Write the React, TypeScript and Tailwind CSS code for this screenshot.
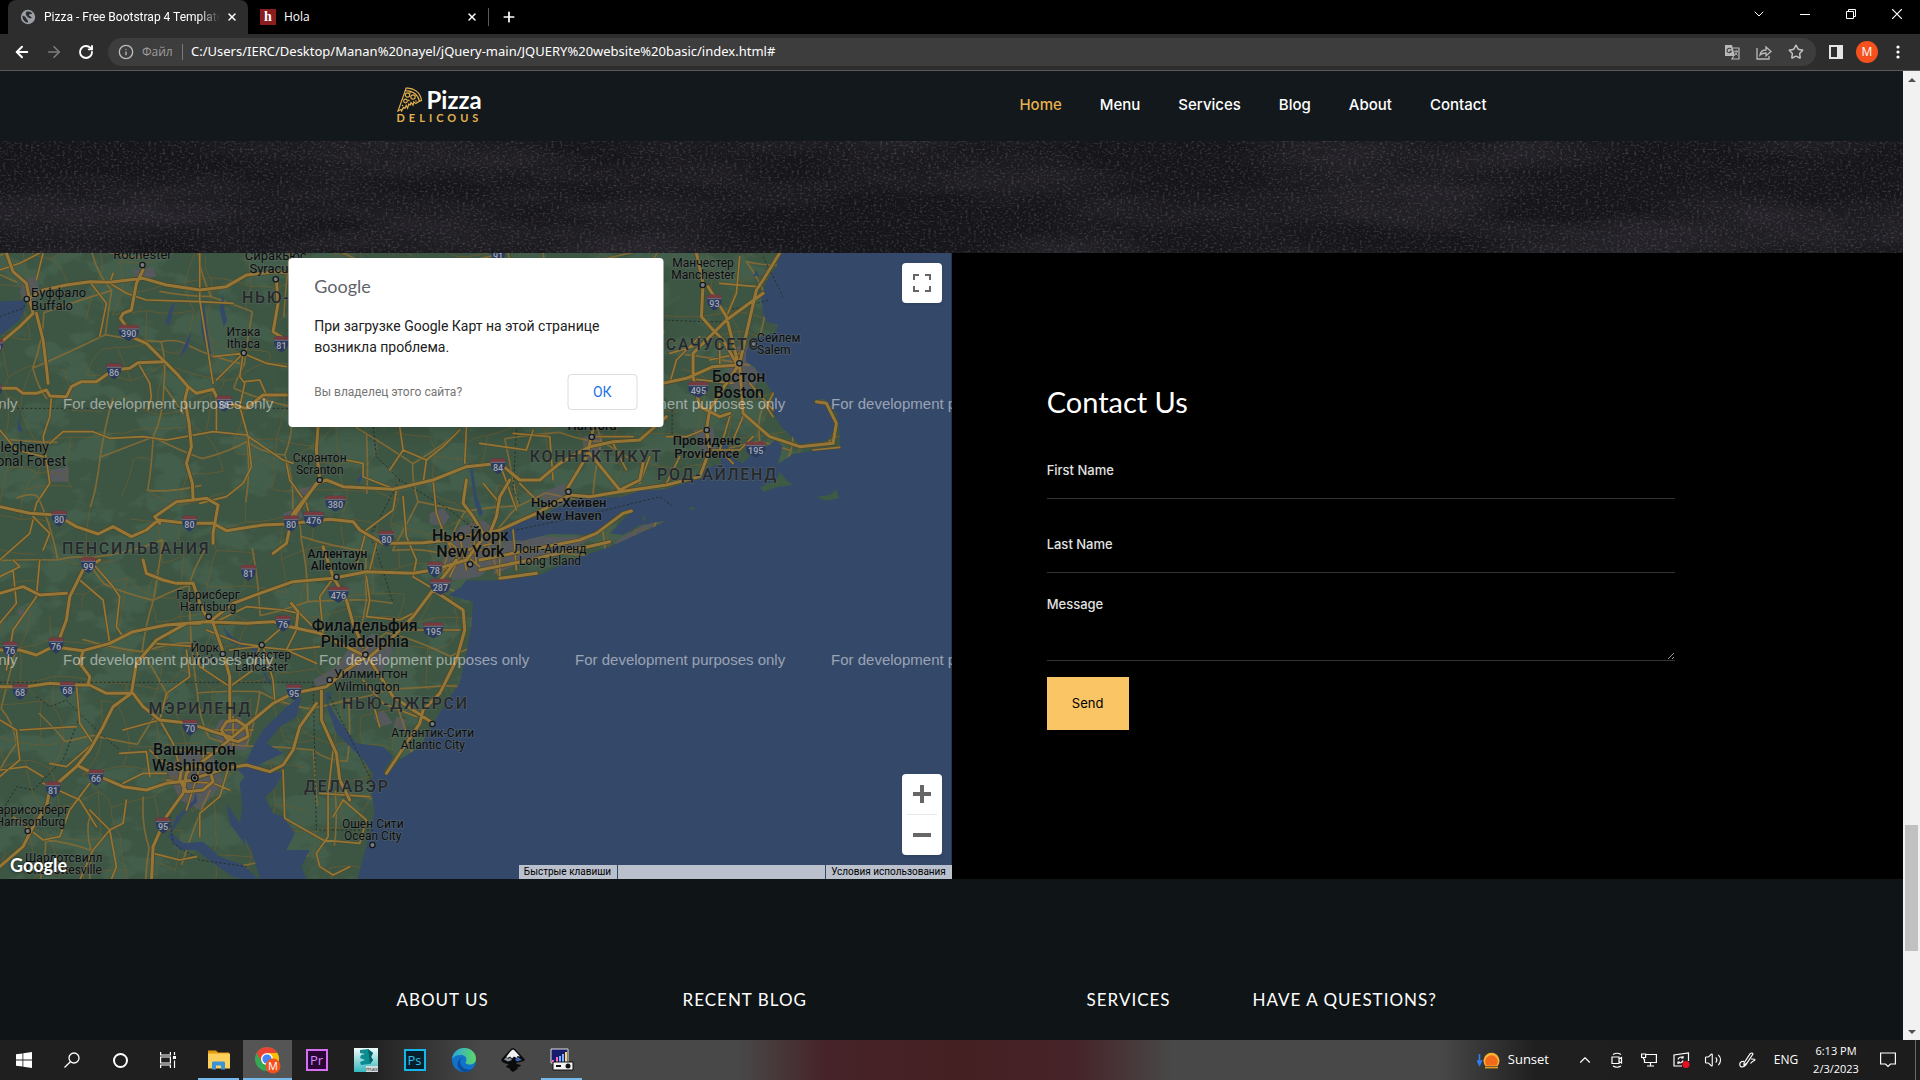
import React from "react";
import {
  ArrowLeft,
  ArrowRight,
  RotateCw,
  Info,
  X,
  Plus,
  Star,
  ChevronDown,
  ChevronUp,
  Volume2,
} from "lucide-react";

/* ------------------------------------------------------------------ */
/* Browser chrome                                                      */
/* ------------------------------------------------------------------ */

function TabStrip() {
  return (
    <div className="flex h-[34px] shrink-0 items-stretch bg-black text-xs text-white">
      <div className="ml-2 flex w-60 items-center rounded-t-lg bg-[#2d2d2d] pr-2 pl-3">
        <svg viewBox="0 0 16 16" className="size-4 shrink-0" aria-hidden="true">
          <circle cx="8" cy="8" r="7.2" fill="#9aa0a6" />
          <path d="M2.5 6.5 C4 7 6 8 6.4 9.4 C6.8 11 8.6 11.2 8 13.4 C5 13.6 2.2 11 2.5 6.5Z" fill="#2d2d2d" />
          <path d="M6.5 2.6 C8.4 2.2 11 2.6 12.4 4.6 C11 5.4 9.6 4.8 9 6 C8.4 7.2 11.6 7.2 11.8 9 C10.4 9.6 8.4 8.8 7.2 7.4 C6 6.4 5 4.6 6.5 2.6Z" fill="#2d2d2d" />
        </svg>
        <span className="ml-2 w-[176px] overflow-hidden font-['Roboto',sans-serif] whitespace-nowrap [mask-image:linear-gradient(to_right,black_88%,transparent)]">
          Pizza - Free Bootstrap 4 Template
        </span>
        <button aria-label="Close tab" className="ml-1 grid size-4 place-items-center">
          <X className="size-3" strokeWidth={3} />
        </button>
      </div>
      <div className="flex w-60 items-center pr-2 pl-3">
        <span className="grid size-4 shrink-0 place-items-center bg-[#8c1d1f] font-['Liberation_Serif',serif] text-sm leading-none font-bold">
          h
        </span>
        <span className="ml-2 flex-1">Hola</span>
        <button aria-label="Close tab" className="grid size-4 place-items-center">
          <X className="size-3" strokeWidth={3} />
        </button>
      </div>
      <div className="my-2 w-px bg-[#5a5a5a]" />
      <button aria-label="New tab" className="ml-2.5 grid w-5 place-items-center">
        <Plus className="size-4" strokeWidth={2.6} />
      </button>
      <div className="ml-auto flex items-center pb-1.5">
        <button aria-label="Search tabs" className="grid w-[46px] place-items-center">
          <ChevronDown className="size-4" strokeWidth={1.5} />
        </button>
        <button aria-label="Minimize" className="grid w-[46px] place-items-center">
          <span className="h-px w-2.5 bg-white" />
        </button>
        <button aria-label="Restore" className="grid w-[46px] place-items-center">
          <svg viewBox="0 0 10 10" className="size-2.5" fill="none" stroke="#fff" aria-hidden="true">
            <path d="M.5 2.5h7v7h-7zM2.5 2.5v-2h7v7h-2" />
          </svg>
        </button>
        <button aria-label="Close window" className="grid w-[46px] place-items-center">
          <svg viewBox="0 0 10 10" className="size-2.5" stroke="#fff" strokeWidth="1.2" aria-hidden="true">
            <path d="M0 0l10 10M10 0L0 10" />
          </svg>
        </button>
      </div>
    </div>
  );
}

function AddressBar() {
  return (
    <div className="flex h-[37px] shrink-0 items-center border-b border-[#5a5a5a] bg-[#2d2d2d] pr-1.5 text-[13px] text-white">
      <button aria-label="Back" className="ml-1.5 grid w-8 place-items-center">
        <ArrowLeft className="size-[18px]" strokeWidth={2.6} />
      </button>
      <button aria-label="Forward" className="grid w-8 place-items-center text-[#7d7d7d]">
        <ArrowRight className="size-[18px]" strokeWidth={2.2} />
      </button>
      <button aria-label="Reload" className="grid w-8 place-items-center">
        <RotateCw className="size-4" strokeWidth={2.8} />
      </button>
      <div className="ml-1.5 flex h-7 flex-1 items-center rounded-full bg-[#3d3d3d] pr-1">
        <Info className="ml-2.5 size-4 text-[#bdbdbd]" strokeWidth={2} />
        <span className="ml-2 w-8 text-xs text-[#9e9e9e]">Файл</span>
        <span className="mr-2 ml-2 h-4 w-px bg-[#7a7a7a]" />
        <input
          aria-label="Address"
          className="min-w-0 flex-1 bg-transparent font-['Noto_Sans',sans-serif] outline-none"
          defaultValue="C:/Users/IERC/Desktop/Manan%20nayel/jQuery-main/JQUERY%20website%20basic/index.html#"
        />
        <button aria-label="Translate" className="grid w-8 place-items-center">
          <svg viewBox="0 0 16 16" className="size-4" fill="none" aria-hidden="true">
            <path d="M1 1h7l3 11H1z" fill="#b9b9b9" />
            <path d="M9 4h6v11H8l1.6-2.6" stroke="#b9b9b9" strokeWidth="1.2" />
            <path d="M7 5.2a2.2 2.2 0 1 0 .3 2H5.4" stroke="#3d3d3d" strokeWidth="1.1" />
            <path d="M10.2 7.2h4M12.2 6.2v1M13.4 7.2c-.4 2-1.4 3-2.4 3.8M11 8.4c.6 1.4 1.4 2 2.6 2.8" stroke="#b9b9b9" />
          </svg>
        </button>
        <button aria-label="Share" className="grid w-8 place-items-center">
          <svg viewBox="0 0 16 16" className="size-4" fill="none" stroke="#b9b9b9" strokeWidth="1.3" aria-hidden="true">
            <path d="M1 4v11h12v-3" />
            <path d="M4 11c.4-3.6 2.600-5 6-5V3l5 4.500-5 4.300V9c-3 0-4.600.4-6 2z" />
          </svg>
        </button>
        <button aria-label="Bookmark" className="grid w-8 place-items-center">
          <Star className="size-4 text-[#c4c4c4]" strokeWidth={2.2} />
        </button>
      </div>
      <button aria-label="Side panel" className="ml-1 grid w-8 place-items-center">
        <span className="flex h-3.5 w-3.5 justify-end border-2 border-[#e4e4e4]">
          <span className="w-1 bg-[#e4e4e4]" />
        </span>
      </button>
      <button className="mx-1 grid size-[22px] place-items-center rounded-full bg-[#f4511e] text-xs">M</button>
      <button aria-label="Menu" className="grid w-8 place-items-center">
        <svg viewBox="0 0 4 14" className="h-3.5 w-1" fill="#fff" aria-hidden="true">
          <circle cx="2" cy="2" r="1.6" />
          <circle cx="2" cy="7" r="1.6" />
          <circle cx="2" cy="12" r="1.6" />
        </svg>
      </button>
    </div>
  );
}

function Scrollbar() {
  return (
    <div className="flex w-[17px] shrink-0 flex-col items-center bg-[#f1f1f1]">
      <div className="grid h-[17px] place-items-center">
        <span className="border-x-4 border-b-4 border-x-transparent border-b-[#505050]" />
      </div>
      <div className="flex-[737]" />
      <div className="w-[13px] flex-[126] bg-[#c1c1c1]" />
      <div className="flex-[72]" />
      <div className="grid h-[17px] place-items-center">
        <span className="border-x-4 border-t-4 border-x-transparent border-t-[#505050]" />
      </div>
    </div>
  );
}

/* ------------------------------------------------------------------ */
/* Site header and banner                                              */
/* ------------------------------------------------------------------ */

const NAV = ["Home", "Menu", "Services", "Blog", "About", "Contact"];

function SiteHeader() {
  return (
    <header className="h-[70px] shrink-0 bg-[#12181b]">
      <div className="mx-auto flex h-full max-w-[1140px] items-center justify-between px-[15px] pb-0.5">
        <a href="#" className="flex flex-col font-['Lato',sans-serif]">
          <span className="flex items-end gap-1">
            <svg viewBox="0 0 26 25" className="h-[25px] w-[26px]" fill="none" stroke="#e5b04e" strokeWidth="1.2" aria-hidden="true">
              <path d="M9 1.200C16 .4 23.500 5 24.500 13.500L22.400 14.200C21 7.500 15.500 3.300 8.300 3.600Z" />
              <path d="M8.300 3.600L1 24l3-1.500.6 1.500 1.800-3.600 1.600.8 1.200-2.800 1.400 2.800 1.200-4.200 1.400 1 .8-2.400 2 2.600.8-3.400 2 1.800 3.600-2.400" />
              <circle cx="10.500" cy="8" r="2.200" />
              <circle cx="16" cy="10" r="2.200" />
              <circle cx="8.500" cy="14" r="1.800" />
              <path d="M11 13l1.500 1M18.500 13.500l1 1M12.500 5.500l1.500.5M5 18l1 1" />
            </svg>
            <span className="text-2xl leading-6 font-bold text-white">Pizza</span>
          </span>
          <span className="text-[11px] leading-3 font-bold tracking-[4px] text-[#e5b04e]">DELICOUS</span>
        </a>
        <nav className="flex gap-[38px] pr-5 font-['Inter',sans-serif] text-[15px] font-medium text-white">
          {NAV.map((item, i) => (
            <a key={item} href="#" className={i === 0 ? "text-[#e5b04e]" : ""}>
              {item}
            </a>
          ))}
        </nav>
      </div>
    </header>
  );
}

function ChalkBanner() {
  return (
    <div className="h-28 shrink-0 overflow-hidden bg-[#161519]">
      <svg className="h-full w-full" aria-hidden="true">
        <defs>
          <filter id="grain" x="0" y="0" width="100%" height="100%" colorInterpolationFilters="sRGB">
            <feTurbulence type="fractalNoise" baseFrequency="0.35 0.5" numOctaves="3" seed="4" />
            <feColorMatrix values="0 0 0 0 .5  0 0 0 0 .49  0 0 0 0 .53  0 0 0 3 -1.500" />
          </filter>
          <filter id="smear" x="0" y="0" width="100%" height="100%" colorInterpolationFilters="sRGB">
            <feTurbulence type="fractalNoise" baseFrequency="0.004 0.018" numOctaves="4" seed="9" />
            <feColorMatrix values="0 0 0 0 .22  0 0 0 0 .21  0 0 0 0 .24  2.400 0 0 0 -.9" />
          </filter>
        </defs>
        <rect width="100%" height="100%" filter="url(#smear)" opacity=".5" />
        <rect width="100%" height="100%" filter="url(#grain)" opacity=".35" />
      </svg>
    </div>
  );
}

/* ------------------------------------------------------------------ */
/* Map: drawn at three units per pixel                                 */
/* ------------------------------------------------------------------ */

const LAND =
  "M0 0H2345L2330 50 2300 95 2285 140 2290 190 2300 215 2335 225 2330 245 2262 268 2240 300 2238 335 2262 350 2300 400 2325 440 2310 470 2345 530 2400 582 2480 572 2502 545 2508 510 2500 480 2470 460 2446 460 2446 450 2475 448 2510 490 2520 545 2522 592 2440 602 2380 612 2335 642 2348 590 2330 568 2300 590 2285 570 2260 610 2230 640 2200 625 2170 560 2155 600 2165 640 2120 655 2100 685 2000 718 1920 722 1860 742 1770 742 1710 752 1640 792 1570 812 1500 850 1490 870 1570 872 1650 852 1770 855 1870 788 1898 780 1880 800 1830 850 1870 855 1920 825 1995 812 1990 820 1920 850 1830 890 1710 932 1620 975 1500 990 1440 992 1400 990 1385 1010 1345 1035 1420 1055 1415 1130 1400 1210 1380 1300 1330 1370 1300 1425 1260 1490 1200 1530 1165 1570 1150 1565 1180 1520 1150 1490 1070 1480 1010 1400 985 1360 995 1325 978 1330 985 1380 1010 1450 1060 1500 1090 1530 1120 1570 1115 1630 1125 1690 1100 1790 1080 1860 1072 1900H0Z";

const WATER = [
  "M0 155L70 150 78 172 60 210 0 258Z",
  "M905 1338L860 1370 830 1400 790 1440 760 1490 742 1530 715 1560 735 1580 720 1600 728 1670 718 1740 755 1800 770 1850 785 1900H925L905 1850 930 1800 860 1800 885 1750 850 1700 820 1690 795 1640 820 1620 850 1570 790 1560 775 1545 850 1510 800 1480 840 1430 890 1400Z",
  "M588 1620L592 1655 545 1700 515 1750 550 1780 610 1775 660 1820 730 1845 790 1900 700 1880 640 1840 590 1800 540 1800 505 1760 530 1700 582 1650Z",
  "M525 160L512 170 498 220 510 225Z",
  "M612 155L602 180 606 250 628 330 634 310 620 220Z",
  "M670 130L660 180 672 230 682 210 674 180Z",
  "M575 240L560 270 540 320 565 295Z",
  "M65 465L52 540 70 548 60 520Z",
  "M725 140L735 190 728 150Z",
  "M1440 800L1425 760 1408 640 1416 640 1432 740 1450 790Z",
  "M670 1130L690 1175 760 1200 800 1290 820 1310 790 1260 770 1195 700 1165Z",
  "M2270 60L2260 80 2278 76Z",
  "M680 1660L690 1720 740 1790 720 1720Z",
  "M1070 690L1085 672 1095 676 1078 698Z",
];

const ISLES = [
  "M2280 712L2330 690 2340 665 2360 690 2382 705 2330 712 2290 725Z",
  "M2450 740L2490 735 2510 718 2518 745 2480 752Z",
  "M2065 775L2080 770 2086 782Z",
  "M1925 795L1938 805 1934 815Z",
];

const URBAN = [
  "M1290 790L1330 775 1350 800 1330 830 1290 820Z",
  "M1330 900L1380 830 1450 810 1500 850 1500 930 1440 980 1360 990 1330 960Z",
  "M1500 880L1600 858 1700 862 1790 858 1700 905 1560 940 1480 975Z",
  "M1870 860L1930 825 1995 812 1920 850 1860 885 1840 880Z",
  "M1050 1190L1120 1150 1180 1200 1150 1260 1060 1270 1020 1290 950 1310 940 1290 1010 1250Z",
  "M660 1410L720 1400 750 1440 740 1500 680 1500 640 1450Z",
  "M500 1560L560 1490 640 1520 670 1600 600 1680 540 1650Z",
  "M850 790L900 772 910 800 870 830Z",
  "M145 660L207 650V695H148Z",
  "M2190 300L2240 280 2260 330 2290 380 2230 440 2180 400Z",
  "M2080 540L2140 530 2150 600 2110 620Z",
  "M1620 730L1700 700 1700 760 1640 780Z",
  "M1750 560L1810 550 1800 620 1750 630Z",
  "M70 90L110 80 120 130 90 170 60 130Z",
  "M400 60L460 50 470 80 410 90Z",
  "M1120 1400L1150 1380 1180 1420 1140 1430Z",
  "M1190 1400L1220 1410 1210 1440 1180 1430Z",
  "M880 720L930 710 960 680 920 740Z",
  "M60 1075L80 1090 70 1105 52 1090Z",
];

const MAJOR = [
  "M80 150L130 120 200 105 270 95 330 97 430 85 500 105 600 120 680 110 740 75 830 65 870 70",
  "M20 9L40 65 80 100 90 150 100 190 60 230 0 280",
  "M430 60L410 100 395 180 370 190 362 205 387 240 405 265 440 280 490 330 530 370 565 410 555 450 568 520 575 590 560 640 578 700 580 750",
  "M0 415L50 415 70 430 110 430 140 420 150 438 200 440 215 410 245 395 290 395 340 360 390 355 415 338 490 335",
  "M565 410L590 430 640 418 650 440 680 460 740 475 790 435 860 435",
  "M0 770L90 790 170 795 230 830 295 852 340 830 395 860 440 840 475 810 560 820 640 820 680 842 790 825 860 822 990 808 1060 815 1080 840 1150 880 1190 880 1270 878 1350 870 1440 850",
  "M580 750L530 755 465 800 480 820",
  "M580 750L620 745 655 765 640 850 640 880",
  "M870 820L905 765 950 700 980 690 1030 710 1180 718 1300 690 1400 650 1500 640 1560 690 1620 690 1680 640 1770 590 1840 575 1920 570 2000 500",
  "M955 530L950 600 960 690 880 790 860 880 820 910",
  "M860 270L820 245 835 160 830 90",
  "M110 190L130 270 142 370 145 400",
  "M0 1200L60 1200 110 1215 160 1190 250 1202 330 1180 400 1145 500 1125 620 1115 740 1120 820 1115 870 1130 960 1150 1040 1190 1100 1220",
  "M630 1115L700 1060 780 1030 880 995 1000 985 1100 965 1240 970 1300 960 1400 930",
  "M600 1120L560 1120 470 1170 410 1240 395 1330 340 1370 310 1430 270 1500 230 1550 150 1620 140 1670 100 1730 70 1790 0 1850",
  "M0 1310L80 1310 150 1300 220 1305 270 1305 320 1330 400 1330 430 1370 480 1410 570 1420 640 1445 690 1460",
  "M250 1202L240 1240 270 1280 265 1305",
  "M640 1120L665 1190 690 1280 690 1410",
  "M1100 1220L1040 1260 980 1310 880 1330 820 1360 760 1410 700 1460 640 1510 600 1540 560 1570 550 1630 500 1700 460 1790 455 1900",
  "M585 1590L500 1600 440 1620 370 1610 300 1580 240 1550",
  "M600 1580L680 1555 740 1545 810 1565 850 1545 880 1500 900 1430 950 1360",
  "M965 1320L965 1410 1010 1510 1020 1590 1050 1650",
  "M1300 1020L1390 1080 1395 1140 1370 1230 1320 1330 1270 1380 1260 1420 1160 1570",
  "M1370 930L1300 1020 1240 1100 1170 1170 1110 1220",
  "M1110 1230L1180 1340 1300 1420",
  "M970 890L1000 980 1040 1050 1060 1120 1090 1190",
  "M540 1590L545 1560 580 1545 630 1560 640 1595 610 1620 560 1625 540 1590",
  "M665 1440L680 1415 710 1410 740 1430 745 1460 715 1475 680 1465 665 1440",
  "M2340 9L2290 90 2270 120 2240 250 2220 340 2160 430 2130 480 2120 540 2130 600 2100 680 2000 705 1860 725 1770 740 1710 735 1610 790 1500 840 1460 850 1400 930",
  "M2090 9L2110 100 2105 200 2140 240 2170 270 2210 340",
  "M2125 110L2180 200 2200 280 2215 340",
  "M1990 400L2060 385 2140 350 2215 345",
  "M2290 130L2180 210 2080 310 2080 380 2100 470 2160 500 2190 490",
  "M2220 350L2230 490 2310 560 2400 590 2500 580 2510 520 2480 460 2450 455",
  "M1780 540L1760 620 1700 720",
  "M1770 610L1860 720 1920 690 1930 640",
  "M1440 930L1540 910 1740 870 1790 850 1870 790 1895 783",
  "M1440 960L1590 930 1830 875",
  "M1500 985L1610 970",
  "M1400 690L1390 760 1420 800 1450 850",
  "M1530 690L1500 740 1490 800 1470 850",
  "M300 930L250 960 210 1040 200 1110 170 1190",
  "M0 1030L70 1010 120 1035 200 1030",
  "M430 930L440 970 490 990 530 1000 580 1000 600 1060 625 1110",
  "M875 1060L895 1085 890 1130",
];

const MINOR = [
  "M155 440L150 500 130 560 150 700 110 760 100 800 150 850 130 900",
  "M150 580L190 545 280 545 330 565 430 560 500 570 640 545 740 555 790 590 850 630 880 640",
  "M600 9L600 150 605 180 640 400",
  "M640 320L730 310 800 340 860 350",
  "M730 310L650 390M730 310L720 380 735 400 720 470 745 560 755 650 730 700 680 740 600 760",
  "M650 440L650 540M735 395L780 390 800 435",
  "M340 70L330 100 380 130 440 150 600 155 700 160",
  "M415 338L450 400 455 440 445 480",
  "M860 640L870 690 920 760 930 800",
  "M1040 630L1090 640 1090 680 1190 720 1180 780 1100 840 1070 950",
  "M1200 530L1210 600 1280 630 1330 590 1380 540",
  "M1210 600L1170 660M1280 630L1270 700",
  "M1400 530L1395 640M1300 690L1310 790 1340 870 1370 920",
  "M40 960L50 1060 0 1120M120 930L110 1040 40 1140 20 1260",
  "M360 1040L350 1130 370 1160M270 930L340 1010 360 1040",
  "M230 1300L240 1420 280 1480 200 1550 150 1540",
  "M480 1410L520 1480 540 1550M370 1440L480 1410 500 1330 570 1280 560 1200",
  "M590 1190L600 1250 690 1310 760 1260 780 1190 850 1130",
  "M790 1190L820 1290 825 1350M690 1200L770 1190 870 1200 960 1190",
  "M620 1140L720 1180 790 1190M640 1120L740 1070 850 1080 900 1090",
  "M900 1090L960 1150M895 1130L860 1200 950 1240",
  "M850 1560L855 1705 970 1770 1080 1780 1100 1710 1030 1650",
  "M1000 1500L985 1630 985 1760 950 1810 960 1850 1000 1875 1050 1850",
  "M1030 1650L1000 1700M960 1630L1110 1640",
  "M1100 980L1110 1050 1100 1100 1200 1110 1240 1090",
  "M1210 1140L1380 1140M1120 1360L1140 1430M1090 1290L1150 1360 1250 1400",
  "M1250 930L1240 980 1290 1010",
  "M380 1650L370 1720 330 1740 350 1850 330 1900M270 1680L330 1740 280 1800 240 1890",
  "M0 1560L80 1550 130 1580M40 1700L130 1770 180 1760 210 1680 270 1600",
  "M460 1810L540 1830 590 1820M500 1570L430 1570 370 1600",
  "M690 1540L660 1640 600 1690 600 1760M640 1600L690 1620",
  "M450 1500L480 1530 540 1560M360 1510L440 1505 450 1580",
  "M2160 100L2270 110M2220 20L2210 130 2180 200M2010 310L2080 290",
  "M2010 400L2030 330 2100 260M2060 385L2200 400M2130 330L2220 310M2160 280V350",
  "M2320 430L2300 470 2320 500M2250 400L2320 480",
  "M2000 560L2060 560 2110 540M2190 500L2160 600 2200 640M2130 600L2220 600 2260 560",
  "M2040 620L2000 700M2230 500L2200 570",
  "M1540 550L1650 560 1660 690M1600 540L1580 600 1440 580M1790 560L1900 560",
  "M1500 640L1550 780M1560 700L1620 760M1450 700L1500 760",
  "M1840 580L1880 660M1950 620L1920 700",
  "M2440 600L2520 592M2480 580L2510 560",
  "M1330 960L1440 900M1340 870L1440 950M1350 980L1390 900 1480 880M1500 850V980M1540 840L1550 960",
  "M1380 860L1400 960M1420 840L1430 940M1320 900H1480",
  "M540 1500L640 1510M620 1490L560 1680M500 1590L640 1600",
  "M640 1440L760 1440M700 1400V1500M650 1500L740 1420",
  "M0 60L60 40 120 9M130 9L110 90M270 95L320 160 300 260",
  "M0 540L50 600 130 620M0 930L90 850 100 810M290 1730L240 1650 130 1600",
  "M0 1410L50 1440 60 1530 0 1580M60 1440L230 1430",
  "M330 1180L310 1050 240 990M460 1180L590 1190M1000 985L960 1040 970 1150",
  "M0 980L60 950 40 930M1130 880L1110 960M1210 740L1220 860 1250 930",
];

const BORDERS = [
  "M0 475H870",
  "M0 1297H940L950 1740H1120",
  "M1120 530L1130 620 1200 690 1350 780 1440 850",
  "M1200 690L1110 860 1130 900 1180 1060",
  "M1500 850L1740 800 1980 740 2020 770",
  "M1550 540L1540 720 1560 760",
  "M1990 210L2110 215 2180 215 2190 180 2310 150",
  "M2290 20L2340 120 2350 140",
  "M2017 480V560",
  "M990 1340L1040 1440 1120 1600",
  "M110 1340L150 1370 200 1350 300 1450 360 1500",
  "M240 1400L190 1530 100 1620 50 1610 10 1680",
  "M510 1700L520 1780 600 1830 740 1850",
  "M0 200L70 175 85 145",
];

const SHIELDS: [string, number, number][] = [
  ["390", 387, 248], ["86", 343, 363], ["81", 845, 282], ["86", 673, 460], ["80", 178, 805],
  ["80", 569, 820], ["80", 874, 820], ["380", 1007, 760], ["476", 942, 808], ["80", 1160, 865],
  ["99", 266, 945], ["81", 746, 968], ["90", -12, 290], ["86", -16, 425], ["93", 2144, 157],
  ["495", 2096, 418], ["195", 2268, 598], ["84", 1495, 648], ["91", 1495, 12], ["78", 1305, 958],
  ["287", 1322, 1010], ["476", 1016, 1033], ["76", 850, 1120], ["195", 1301, 1140], ["76", 31, 1198],
  ["76", 169, 1186], ["68", 61, 1325], ["68", 203, 1318], ["95", 883, 1326], ["70", 571, 1432],
  ["66", 289, 1582], ["81", 160, 1618], ["95", 490, 1726],
];

type City = { lines: string[]; x: number; y: number; size: number; medium?: boolean; left?: boolean };

const CITIES: City[] = [
  { lines: ["Рочестер", "Rochester"], x: 428, y: -12, size: 39 },
  { lines: ["Сиракьюс", "Syracuse"], x: 828, y: 29, size: 39 },
  { lines: ["Буффало", "Buffalo"], x: 94, y: 140, size: 39, left: true },
  { lines: ["Итака", "Ithaca"], x: 731, y: 259, size: 36 },
  { lines: ["Allegheny", "National Forest"], x: 56, y: 606, size: 42 },
  { lines: ["Скрантон", "Scranton"], x: 960, y: 636, size: 36 },
  { lines: ["Аллентаун", "Allentown"], x: 1013, y: 924, size: 36, medium: true },
  { lines: ["Нью-Йорк", "New York"], x: 1412, y: 874, size: 48, medium: true },
  { lines: ["Манчестер", "Manchester"], x: 2110, y: 52, size: 36 },
  { lines: ["Сейлем", "Salem"], x: 2272, y: 276, size: 36, left: true },
  { lines: ["Бостон", "Boston"], x: 2217, y: 396, size: 48, medium: true },
  { lines: ["Хартфорд", "Hartford"], x: 1777, y: 502, size: 39, medium: true },
  { lines: ["Провиденс", "Providence"], x: 2121, y: 584, size: 39, medium: true },
  { lines: ["Нью-Хейвен", "New Haven"], x: 1707, y: 772, size: 39, medium: true },
  { lines: ["Лонг-Айленд", "Long Island"], x: 1651, y: 909, size: 36 },
  { lines: ["Гаррисберг", "Harrisburg"], x: 625, y: 1047, size: 36 },
  { lines: ["Йорк", "York"], x: 615, y: 1207, size: 36 },
  { lines: ["Ланкастер", "Lancaster"], x: 785, y: 1228, size: 36 },
  { lines: ["Филадельфия", "Philadelphia"], x: 1095, y: 1144, size: 48, medium: true },
  { lines: ["Уилмингтон", "Wilmington"], x: 1003, y: 1283, size: 39, left: true },
  { lines: ["Атлантик-Сити", "Atlantic City"], x: 1299, y: 1461, size: 36 },
  { lines: ["Вашингтон", "Washington"], x: 584, y: 1514, size: 48, medium: true },
  { lines: ["Ошен Сити", "Ocean City"], x: 1119, y: 1734, size: 36 },
  { lines: ["Гаррисонберг", "Harrisonburg"], x: 92, y: 1692, size: 36 },
  { lines: ["Шарлотсвилл", "Charlottesville"], x: 192, y: 1836, size: 36 },
];

const STATES: [string, number, number][] = [
  ["ПЕНСИЛЬВАНИЯ", 187, 911],
  ["НЬЮ-ЙОРК", 727, 158],
  ["МАССАЧУСЕТС", 1878, 299],
  ["КОННЕКТИКУТ", 1590, 635],
  ["РОД-АЙЛЕНД", 1972, 689],
  ["МЭРИЛЕНД", 446, 1391],
  ["НЬЮ-ДЖЕРСИ", 1027, 1377],
  ["ДЕЛАВЭР", 913, 1626],
];

const DOTS: [number, number][] = [
  [428, 45], [828, 88], [81, 147], [732, 309], [960, 690], [1411, 943], [2109, 105], [2262, 282],
  [2219, 340], [1776, 561], [2121, 540], [1706, 725], [1010, 981], [627, 1100], [669, 1212],
  [786, 1185], [1097, 1214], [990, 1290], [1298, 1422], [84, 1743], [1118, 1785],
];

/* Fills the land with a loose mesh of local roads. */
function localRoads(start: number, step: number, density: number): string {
  let seed = start;
  const rnd = () => {
    seed = (seed * 16807) % 2147483647;
    return seed / 2147483647;
  };
  const cols = Math.ceil(2560 / step) + 1;
  const rows = Math.ceil(1900 / step) + 2;
  const jitter = step * 0.75;
  const pts: [number, number][][] = [];
  for (let r = 0; r < rows; r++) {
    pts.push([]);
    for (let c = 0; c < cols; c++) {
      pts[r].push([Math.round(c * step + (rnd() - 0.5) * jitter), Math.round(r * step + (rnd() - 0.5) * jitter)]);
    }
  }
  let d = "";
  const link = (a: [number, number], b: [number, number]) => {
    const mx = Math.round((a[0] + b[0]) / 2 + (rnd() - 0.5) * 36);
    const my = Math.round((a[1] + b[1]) / 2 + (rnd() - 0.5) * 36);
    d += `M${a[0]} ${a[1]}Q${mx} ${my} ${b[0]} ${b[1]}`;
  };
  for (let r = 0; r < rows - 1; r++) {
    for (let c = 0; c < cols - 1; c++) {
      if (rnd() < density) link(pts[r][c], pts[r][c + 1]);
      if (rnd() < density) link(pts[r][c], pts[r + 1][c]);
    }
  }
  return d;
}

const LOCAL = localRoads(77, 92, 0.55);
const REGIONAL = localRoads(4021, 150, 0.5);

function Shield({ n, x, y }: { n: string; x: number; y: number }) {
  const w = n.length > 2 ? 30 : 22;
  return (
    <g transform={`translate(${x} ${y})`}>
      <path
        d={`M${-w} -20Q${-w / 2} -26 0 -22Q${w / 2} -26 ${w} -20Q${w + 2} 4 ${w - 8} 14Q8 20 0 25Q-8 20 ${8 - w} 14Q${-w - 2} 4 ${-w} -20Z`}
        fill="#2b3a5c"
      />
      <path d={`M${-w} -20Q${-w / 2} -26 0 -22Q${w / 2} -26 ${w} -20V-12H${-w}Z`} fill="#763b3d" />
      <path d={`M${-w} -11H${w}`} stroke="#8a8f99" strokeWidth="2" />
      <text y="14" textAnchor="middle" fontSize="27" fontWeight="500" fill="#a3a8b2">
        {n}
      </text>
    </g>
  );
}

function MapCanvas() {
  const halo = { stroke: "#626b66", strokeWidth: 5, strokeOpacity: 0.55, paintOrder: "stroke" as const };
  return (
    <svg
      viewBox="0 9 2856 1878"
      preserveAspectRatio="xMidYMid slice"
      className="absolute inset-0 h-full w-full font-['Roboto',sans-serif]"
      role="img"
      aria-label="Map"
    >
      <defs>
        <clipPath id="land">
          <path d={LAND} />
        </clipPath>
        <filter id="forest" x="0" y="0" width="100%" height="100%" colorInterpolationFilters="sRGB">
          <feTurbulence type="fractalNoise" baseFrequency="0.007 0.011" numOctaves="4" seed="12" />
          <feColorMatrix values="0 0 0 0 .275  0 0 0 0 .39  0 0 0 0 .31  9 0 0 0 -4.500" />
        </filter>
      </defs>
      <rect y="0" width="2856" height="1900" fill="#34486a" />
      <path d={LAND} fill="#3d5543" />
      <g clipPath="url(#land)">
        <rect width="2560" height="1900" filter="url(#forest)" opacity=".7" />
        <path d={URBAN.join("")} fill="#55595d" />
        <path d={LOCAL} fill="none" stroke="#6e5d30" strokeWidth="3" strokeOpacity=".7" />
        <path d={REGIONAL} fill="none" stroke="#8a6c32" strokeWidth="5" strokeOpacity=".85" />
      </g>
      <path d={WATER.join("")} fill="#34486a" />
      <path d={ISLES.join("")} fill="#3d5a45" />
      <path d={BORDERS.join("")} fill="none" stroke="#26302c" strokeWidth="3" strokeDasharray="7 6" />
      <g fill="none" strokeLinejoin="round" strokeLinecap="round">
        <path d={MINOR.join("")} stroke="#524a2c" strokeWidth="8" />
        <path d={MINOR.join("")} stroke="#967634" strokeWidth="5" />
        <path d={MAJOR.join("")} stroke="#4f4628" strokeWidth="13" />
        <path d={MAJOR.join("")} stroke="#957636" strokeWidth="9" />
      </g>
      {SHIELDS.map(([n, x, y]) => (
        <Shield key={`${n}-${x}`} n={n} x={x} y={y} />
      ))}
      {DOTS.map(([x, y]) => (
        <circle key={`${x}-${y}`} cx={x} cy={y} r="8" fill="#777c80" stroke="#16191a" strokeWidth="4" />
      ))}
      <circle cx="585" cy="1584" r="10" fill="#777c80" stroke="#0c0e0e" strokeWidth="4" />
      <circle cx="585" cy="1584" r="5" fill="#0c0e0e" />
      {STATES.map(([name, x, y]) => (
        <text key={name} x={x} y={y} fontSize="48" letterSpacing="5" fontWeight="500" fill="#25292b" {...halo}>
          {name}
        </text>
      ))}
      {CITIES.map((city) =>
        city.lines.map((line, i) => (
          <text
            key={line}
            x={city.x}
            y={city.y + i * city.size}
            textAnchor={city.left ? "start" : "middle"}
            fontSize={city.size}
            fontWeight={city.medium ? 500 : 400}
            fill="#0b0d0e"
            {...halo}
          >
            {line}
          </text>
        )),
      )}
      {[478, 1246].map((y) =>
        [-577, 190, 958, 1726, 2494].map((x) => (
          <text key={`${x}-${y}`} x={x} y={y} fontSize="45" fill="#fff" fillOpacity=".5" className="font-['Liberation_Sans',sans-serif]">
            For development purposes only
          </text>
        )),
      )}
    </svg>
  );
}

function MapDialog() {
  return (
    <div
      role="dialog"
      aria-label="Google"
      className="absolute top-[5px] left-1/2 w-[375px] -translate-x-1/2 rounded bg-white px-[26px] pt-4 pb-[17px] font-['Roboto',sans-serif] text-[#212121] shadow-lg"
    >
      <p className="font-['Lato',sans-serif] text-lg leading-6 text-[#5f6368]">Google</p>
      <p className="mt-[18px] text-sm leading-[21px]">
        При загрузке Google Карт на этой странице возникла проблема.
      </p>
      <div className="mt-4 flex items-center justify-between">
        <a href="#" className="text-xs text-[#757575]">
          Вы владелец этого сайта?
        </a>
        <button className="h-9 w-[70px] rounded border border-[#dadce0] text-sm text-[#1a73e8]">ОК</button>
      </div>
    </div>
  );
}

function MapPanel() {
  return (
    <div className="relative w-1/2 overflow-hidden">
      <MapCanvas />
      <MapDialog />
      <button aria-label="Toggle fullscreen view" className="absolute top-2.5 right-2.5 grid size-10 place-items-center rounded-sm bg-white shadow">
        <svg viewBox="0 0 18 18" className="size-[18px]" fill="#666" aria-hidden="true">
          <path d="M0 0v6h2V2h4V0H0zm16 0h-4v2h4v4h2V0h-2zm0 16h-4v2h6v-6h-2v4zM2 12H0v6h6v-2H2v-4z" />
        </svg>
      </button>
      <div className="absolute right-2.5 bottom-6 flex w-10 flex-col items-center rounded-sm bg-white shadow">
        <button aria-label="Zoom in" className="grid size-10 place-items-center">
          <svg viewBox="0 0 18 18" className="size-[18px]" fill="#666" aria-hidden="true">
            <path d="M18 7h-7V0H7v7H0v4h7v7h4v-7h7z" />
          </svg>
        </button>
        <span className="h-px w-[30px] bg-[#e6e6e6]" />
        <button aria-label="Zoom out" className="grid size-10 place-items-center">
          <svg viewBox="0 0 18 18" className="size-[18px]" fill="#666" aria-hidden="true">
            <path d="M0 7h18v4H0z" />
          </svg>
        </button>
      </div>
      <span className="absolute bottom-0 left-2.5 font-['Lato',sans-serif] text-lg leading-7 font-bold text-white [text-shadow:0_0_3px_rgba(0,0,0,.6)]">
        Google
      </span>
      <div className="absolute right-0 bottom-0 flex h-3.5 gap-px font-['Roboto',sans-serif] text-[10px] leading-[14px] whitespace-nowrap text-black">
        <button className="w-[98px] bg-[#bac1cd]">Быстрые клавиши</button>
        <span className="w-[207px] bg-[#bac1cd]" />
        <a href="#" className="w-[126px] bg-[#bac1cd] text-center">
          Условия использования
        </a>
      </div>
    </div>
  );
}

/* ------------------------------------------------------------------ */
/* Contact form                                                        */
/* ------------------------------------------------------------------ */

const FIELD =
  "block w-full rounded-none border-b border-[#333] bg-transparent text-[13px] font-medium text-white outline-none placeholder:text-[#e2e2e2]";

function ContactForm() {
  return (
    <form className="flex w-1/2 flex-col items-start bg-black pt-[131px] pr-[12%] pl-[5%] font-['Inter',sans-serif]">
      <h2 className="mb-[25px] font-['Lato',sans-serif] text-[29px] leading-9 text-white">Contact Us</h2>
      <label htmlFor="first" className="sr-only">
        First Name
      </label>
      <input id="first" placeholder="First Name" className={FIELD + " mb-5 h-[54px] pb-1"} />
      <label htmlFor="last" className="sr-only">
        Last Name
      </label>
      <input id="last" placeholder="Last Name" className={FIELD + " mb-5 h-[54px] pb-1"} />
      <label htmlFor="message" className="sr-only">
        Message
      </label>
      <textarea id="message" placeholder="Message" className={FIELD + " mb-4 h-[68px] resize-y pt-0.5"} />
      <button type="button" className="h-[53px] w-[82px] bg-[#fac564] text-[13px] text-black">
        Send
      </button>
    </form>
  );
}

function SiteFooter() {
  return (
    <footer className="flex-1 bg-[#0f1416]">
      <div className="mx-auto grid max-w-[1140px] grid-cols-[286fr_404fr_166fr_254fr] px-[15px] pt-[111px] font-['Lato',sans-serif] text-[17px] leading-5 tracking-[1px] whitespace-nowrap text-white">
        <h2>ABOUT US</h2>
        <h2>RECENT BLOG</h2>
        <h2>SERVICES</h2>
        <h2>HAVE A QUESTIONS?</h2>
      </div>
    </footer>
  );
}

/* ------------------------------------------------------------------ */
/* Taskbar                                                             */
/* ------------------------------------------------------------------ */

function AppTile({ label, bg, border, color }: { label: string; bg: string; border: string; color: string }) {
  return (
    <span className={`grid h-[22px] w-[22px] place-items-center border-2 text-[13px] leading-none ${bg} ${border} ${color}`}>
      {label}
    </span>
  );
}

const APPS: { name: string; active?: boolean; running?: boolean; icon: React.ReactNode }[] = [
  {
    name: "File Explorer",
    running: true,
    icon: (
      <svg viewBox="0 0 22 19" className="h-5 w-[22px]">
        <path d="M0 0h8l2 2h11v6H0z" fill="#e59b0c" />
        <path d="M0 3h22v15H0z" fill="#fbd05c" />
        <path d="M4 19v-7l1-1h11l1 1v7h-4v-4H8v4z" fill="#3c92d6" />
      </svg>
    ),
  },
  {
    name: "Google Chrome",
    active: true,
    running: true,
    icon: (
      <svg viewBox="0 0 28 28" className="size-7">
        <circle cx="13" cy="13" r="12" fill="#34a853" />
        <path d="M13 7h10.400A12 12 0 0 1 13 25l5.200-9Z" fill="#fbbc05" />
        <path d="M2.600 7L7.800 16 13 13V7h10.400A12 12 0 0 0 2.600 7Z" fill="#ea4335" />
        <circle cx="13" cy="13" r="6" fill="#fff" />
        <circle cx="13" cy="13" r="4.600" fill="#4285f4" />
        <circle cx="19" cy="20" r="7.500" fill="#f4511e" />
        <text x="19" y="24" textAnchor="middle" fontSize="11" fill="#fff">M</text>
      </svg>
    ),
  },
  { name: "Premiere Pro", icon: <AppTile label="Pr" bg="bg-[#2a0634]" border="border-[#d36ff0]" color="text-[#d98bff]" /> },
  {
    name: "3ds Max",
    icon: (
      <svg viewBox="0 0 24 24" className="size-6">
        <defs>
          <linearGradient id="max" x1="0" y1="0" x2="0" y2="1">
            <stop offset="0" stopColor="#f2fbfb" />
            <stop offset="1" stopColor="#35b7bd" />
          </linearGradient>
        </defs>
        <path d="M0 0h24v24H0z" fill="url(#max)" />
        <path d="M6 2l8-1 5 4-2 4 2 3-3 4-9 1-1-3 5-2-5-2 1-3 4-1-5-1z" fill="#0b8d92" />
        <path d="M14 1l5 4-2 4 2 3-3 4-1-8z" fill="#056266" />
        <path d="M12 18h12v6H12z" fill="#d3dcdd" />
        <text x="18" y="23" textAnchor="middle" fontSize="6" fill="#333">max</text>
      </svg>
    ),
  },
  { name: "Photoshop", icon: <AppTile label="Ps" bg="bg-[#071e2b]" border="border-[#16b5ea]" color="text-[#2cc1f0]" /> },
  {
    name: "Microsoft Edge",
    icon: (
      <svg viewBox="0 0 24 24" className="size-6">
        <defs>
          <linearGradient id="edge" x1="0" y1="0" x2="1" y2="0">
            <stop offset="0" stopColor="#2aa5dc" />
            <stop offset="1" stopColor="#5fd866" />
          </linearGradient>
        </defs>
        <circle cx="12" cy="12" r="12" fill="#1272c9" />
        <path d="M0 11C1 4 6 0 12 0c7 0 12 5 12 10.500 0 4-3 6-6.500 6-2.500 0-4-1-4-2 0-.8 1-1 1-2.700C14.500 9 12 7 8.500 7 4.500 7 1.500 9 0 11Z" fill="url(#edge)" />
        <path d="M8 13c0 5 4 8.500 9 8.500 2 0 3.600-.5 5-1.500-2 2.600-5.600 4-9.500 4C7 23 4.500 18 6 13.500 7 11 9 10 10.500 10 9 11 8 12 8 13Z" fill="#0a4f9c" />
      </svg>
    ),
  },
  {
    name: "Inkscape",
    icon: (
      <svg viewBox="0 0 24 24" className="size-6">
        <path d="M12 0Q13.500 0 16 3L23 10.500Q25 13 21 13.500L15 15Q15 16 18 16.500 21 17 19 18.500L16 19.500Q18 21 15 22L12 24 9 22Q10 20.500 7 20 4 19 6 17.500L8 16.500 3 15Q-1 13 1 10.500L8 3Q10.500 0 12 0Z" fill="#0b0b0b" />
        <path d="M12 1.500Q13 1.500 15 4L19 8.500 16.500 8 15.500 10 13 8.500 11 10.500 9 8.500 6.500 10 5.500 8.500 9 4Q11 1.500 12 1.500Z" fill="#eef0f3" />
        <path d="M5.500 9L7 11l2-1.500 2 2.500-4 1.500-4-2z" fill="#8c939d" />
        <path d="M17 9l4 3-5 1.500-2-2z" fill="#3c66b0" />
      </svg>
    ),
  },
  {
    name: "Screen Recorder",
    running: true,
    icon: (
      <svg viewBox="0 0 24 24" className="size-6">
        <path d="M1 1h17v14H1z" fill="#161b6b" stroke="#dcdcdc" />
        <path d="M2 12h2v3H2zM6 9h2v6H6z" fill="#ff6cb0" />
        <path d="M9 8h2v7H9zM12 6h2v9h-2z" fill="#7ab0ff" />
        <path d="M15 4h2v11h-2z" fill="#ffd35c" />
        <path d="M3 14h20v8H3z" fill="#f2f2f2" stroke="#111" />
        <circle cx="18" cy="18" r="2.500" fill="#111" />
        <path d="M6 18h5" stroke="#111" strokeWidth="2" />
      </svg>
    ),
  },
];

function Taskbar() {
  return (
    <div className="flex h-10 shrink-0 items-stretch bg-[linear-gradient(to_right,#1f1f1f_0%,#1f1f1f_19%,#484848_25%,#484848_38.500%,#462328_43%,#452023_50%,#462328_56%,#484848_61%,#484848_75%,#1f1f1f_80%,#1c1c1c_100%)] text-xs text-white">
      <button aria-label="Start" className="grid w-12 place-items-center">
        <svg viewBox="0 0 16 16" className="size-4" fill="#fff" aria-hidden="true">
          <path d="M0 2.300L6.500 1.400V7.600H0zM7.300 1.300L16 0v7.600H7.300zM0 8.400h6.500v6.200L0 13.700zM7.300 8.400H16V16l-8.700-1.300z" />
        </svg>
      </button>
      <button aria-label="Search" className="grid w-12 place-items-center">
        <svg viewBox="0 0 16 16" className="size-4" fill="none" stroke="#fff" strokeWidth="1.300" aria-hidden="true">
          <circle cx="10" cy="6" r="5" />
          <path d="M6.400 9.800L0.500 15.500" />
        </svg>
      </button>
      <button aria-label="Cortana" className="grid w-12 place-items-center">
        <span className="size-[15px] rounded-full border-2 border-white" />
      </button>
      <button aria-label="Task View" className="grid w-12 place-items-center">
        <svg viewBox="0 0 16 16" className="size-4" fill="none" stroke="#fff" strokeWidth="1.200" aria-hidden="true">
          <path d="M.6 0v3h9.800V0M.6 16v-3h9.800v3M.6 5h9.800v6H.6zM14.500 0v3M14.500 8.500V16" />
          <path d="M13.500 4.500h2v2h-2z" fill="#fff" />
        </svg>
      </button>
      <div className="ml-0.5 flex">
        {APPS.map((app) => (
          <button
            key={app.name}
            aria-label={app.name}
            className={`relative grid w-[49px] place-items-center ${app.active ? "bg-[#555]" : ""}`}
          >
            {app.icon}
            {app.running && (
              <span className={`absolute bottom-0 h-0.5 bg-[#76b9ed] ${app.active ? "inset-x-0" : "inset-x-1"}`} />
            )}
          </button>
        ))}
      </div>
      <button className="ml-auto flex items-center gap-2 text-[13px]">
        <svg viewBox="0 0 23 17" className="h-[17px] w-[23px]" aria-hidden="true">
          <path d="M2.500 2v8M.5 9l2 4 2-4z" stroke="#2f7df0" strokeWidth="1.600" fill="#2f7df0" />
          <path d="M8.500 14a8 8 0 1 1 12 0z" fill="#f9b233" />
          <path d="M9.500 13.500a6.300 6.300 0 1 1 10 0z" fill="#f26b1d" />
          <path d="M8 15.500h13" stroke="#e39a1e" strokeWidth="1.800" />
        </svg>
        Sunset
      </button>
      <div className="ml-5 flex">
        <button aria-label="Show hidden icons" className="grid w-8 place-items-center">
          <ChevronUp className="size-[18px]" strokeWidth={1.500} />
        </button>
        <button aria-label="Meet Now" className="grid w-8 place-items-center">
          <svg viewBox="0 0 16 16" className="size-4" fill="none" stroke="#fff" strokeWidth="1.200" aria-hidden="true">
            <path d="M3 5h7v6.500H3zM10 7l2.500-1.500v5.500L10 9.500M4 2.500Q8 0 12 2.500M4 14Q8 16.500 12 14" />
          </svg>
        </button>
        <button aria-label="Network" className="grid w-8 place-items-center">
          <svg viewBox="0 0 16 14" className="h-3.5 w-4" fill="none" stroke="#fff" strokeWidth="1.200" aria-hidden="true">
            <path d="M5 1.500h10.400v8H3.500V6M9.500 9.500V13M6 13h7M.6 1h4v3.500H.6zM2.600 4.500V6h1" />
          </svg>
        </button>
        <button aria-label="Update" className="grid w-8 place-items-center">
          <svg viewBox="0 0 17 16" className="h-4 w-[17px]" fill="none" stroke="#fff" strokeWidth="1.200" aria-hidden="true">
            <path d="M9 14H1V3l14.500-2v8" />
            <path d="M5 7.500a3 3 0 0 1 5-1.500M10 4v2H8M10 8.500a3 3 0 0 1-5 1.500M5 12v-2h2" />
            <circle cx="13" cy="12.500" r="3.500" fill="#e81123" stroke="none" />
          </svg>
        </button>
        <button aria-label="Volume" className="grid w-8 place-items-center">
          <Volume2 className="size-[18px]" strokeWidth={1.500} />
        </button>
        <button aria-label="Pen" className="grid w-9 place-items-center">
          <svg viewBox="0 0 17 16" className="h-4 w-[17px]" fill="none" stroke="#fff" strokeWidth="1.200" aria-hidden="true">
            <path d="M5 11L11 2q2-2 3 0L8 11l-3 2zM5 9.500C1 9 0 12 1.500 14.500 4 16 7 13.500 8 11M12 7c3 0 4 0 4 .8S13 9 11.500 11.500" />
          </svg>
        </button>
        <button className="w-[42px] text-center">ENG</button>
        <button className="w-[58px] text-center text-[11px] leading-[18px] whitespace-nowrap">
          6:13 PM
          <br />
          2/3/2023
        </button>
        <button aria-label="Notifications" className="grid w-[46px] place-items-center">
          <svg viewBox="0 0 16 16" className="size-4" fill="none" stroke="#fff" strokeWidth="1.200" aria-hidden="true">
            <path d="M.6 1h14.800v11H10.500L8 14.500 5.500 12H.6z" />
          </svg>
        </button>
        <span className="mr-1 ml-1 w-px bg-[#6a6a6a]" />
      </div>
    </div>
  );
}

export default function App() {
  return (
    <div className="flex h-screen flex-col overflow-hidden bg-black font-['Open_Sans',sans-serif]">
      <TabStrip />
      <AddressBar />
      <div className="flex min-h-0 flex-1">
        <main className="flex min-w-0 flex-1 flex-col overflow-hidden">
          <SiteHeader />
          <ChalkBanner />
          <section className="flex min-h-[626px] shrink-0">
            <MapPanel />
            <ContactForm />
          </section>
          <SiteFooter />
        </main>
        <Scrollbar />
      </div>
      <Taskbar />
    </div>
  );
}
